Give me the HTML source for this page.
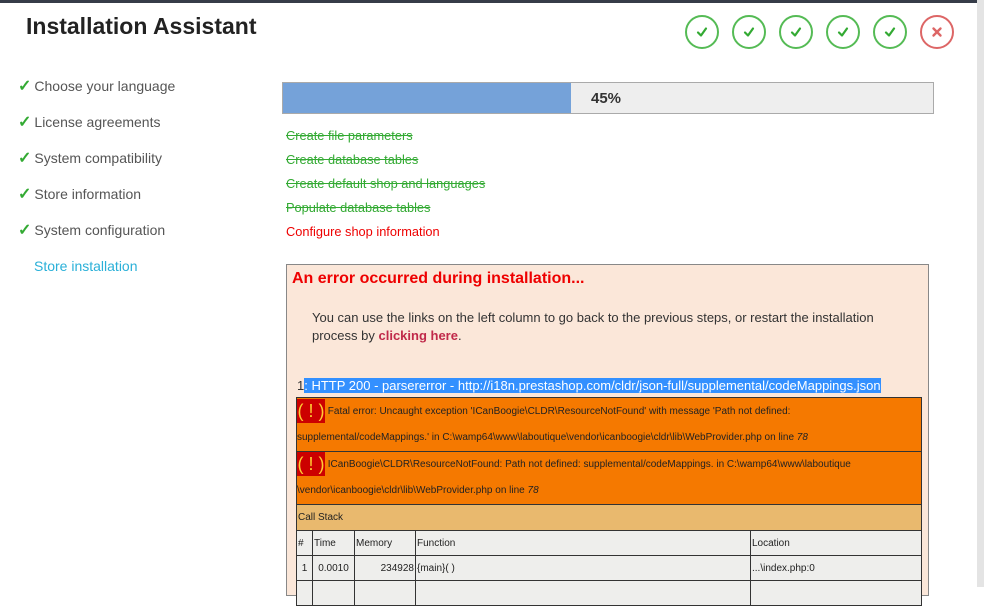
<html><head><style>
body{margin:0;width:984px;height:587px;overflow:hidden;background:#fff;font-family:"Liberation Sans",Arial,sans-serif;position:relative}
.a{position:absolute}
.nav{left:18px;font-size:14px;color:#555}
.nav b{color:#3a3;font-size:16px;margin-right:3px}
.st{left:286px;font-size:12.8px;color:#3a3;text-decoration:line-through}
.c{width:30px;height:30px;border:2px solid #5b5;border-radius:50%;top:15px}
.c svg{position:absolute;left:7px;top:7px}
table{border-collapse:collapse;font-size:10px;color:#222;table-layout:fixed}
td{border:1px solid #333;padding:1px}
.ex{display:inline-block;background:#c00;color:#fc3;font-size:18px;width:28px;text-align:center;line-height:24px;vertical-align:middle}
</style></head><body>
<div class="a" style="left:0;top:0;width:977px;height:3px;background:#363c48"></div>
<div class="a" style="left:977px;top:0;width:7px;height:587px;background:#e4e4e4"></div>
<div class="a" style="left:26px;top:13px;font-size:23px;font-weight:bold;color:#222">Installation Assistant</div>
<div class="a c" style="left:685px"><svg width="16" height="16"><path d="M4 8.5l3 3 5-7" fill="none" stroke="#3a3" stroke-width="2.2" stroke-linecap="round" stroke-linejoin="round"/></svg></div>
<div class="a c" style="left:732px"><svg width="16" height="16"><path d="M4 8.5l3 3 5-7" fill="none" stroke="#3a3" stroke-width="2.2" stroke-linecap="round" stroke-linejoin="round"/></svg></div>
<div class="a c" style="left:779px"><svg width="16" height="16"><path d="M4 8.5l3 3 5-7" fill="none" stroke="#3a3" stroke-width="2.2" stroke-linecap="round" stroke-linejoin="round"/></svg></div>
<div class="a c" style="left:826px"><svg width="16" height="16"><path d="M4 8.5l3 3 5-7" fill="none" stroke="#3a3" stroke-width="2.2" stroke-linecap="round" stroke-linejoin="round"/></svg></div>
<div class="a c" style="left:873px"><svg width="16" height="16"><path d="M4 8.5l3 3 5-7" fill="none" stroke="#3a3" stroke-width="2.2" stroke-linecap="round" stroke-linejoin="round"/></svg></div>
<div class="a c" style="left:920px;border-color:#d66"><svg width="16" height="16"><path d="M4.5 4.5l7 7M11.5 4.5l-7 7" fill="none" stroke="#d66" stroke-width="2.4" stroke-linecap="round"/></svg></div>
<div class="a nav" style="top:76px"><b>✓</b>Choose your language</div>
<div class="a nav" style="top:112px"><b>✓</b>License agreements</div>
<div class="a nav" style="top:148px"><b>✓</b>System compatibility</div>
<div class="a nav" style="top:184px"><b>✓</b>Store information</div>
<div class="a nav" style="top:220px"><b>✓</b>System configuration</div>
<div class="a nav" style="top:258px;left:34px;color:#2ab0d8">Store installation</div>
<div class="a" style="left:282px;top:82px;width:650px;height:30px;border:1px solid #aaa;background:#eee"></div>
<div class="a" style="left:283px;top:83px;width:288px;height:30px;background:#75a2d9"></div>
<div class="a" style="left:591px;top:90px;font-size:15px;font-weight:bold;color:#333">45%</div>
<div class="a st" style="top:128px">Create file parameters</div>
<div class="a st" style="top:152px">Create database tables</div>
<div class="a st" style="top:176px">Create default shop and languages</div>
<div class="a st" style="top:200px">Populate database tables</div>
<div class="a st" style="top:224px;color:#e00;text-decoration:none">Configure shop information</div>
<div class="a" style="left:286px;top:264px;width:641px;height:330px;border:1px solid #888;background:#fbe7d9"></div>
<div class="a" style="left:292px;top:270px;font-size:16px;font-weight:bold;color:#e00">An error occurred during installation...</div>
<div class="a" style="left:312px;top:309px;width:590px;font-size:13px;line-height:18px;color:#333">You can use the links on the left column to go back to the previous steps, or restart the installation process by <b style="color:#c0294a">clicking here</b>.</div>
<div class="a" style="left:297px;top:378px;font-size:13px;color:#333">1<span style="background:#3390ff;color:#fff">: HTTP 200 - parsererror - http://i18n.prestashop.com/cldr/json-full/supplemental/codeMappings.json</span></div>
<table class="a" style="left:296px;top:397px;width:626px">
<colgroup><col style="width:16px"><col style="width:42px"><col style="width:61px"><col style="width:335px"><col></colgroup>
<tr style="background:#f57900;height:54px"><td colspan="5" style="line-height:26px;padding:0"><span class="ex">( ! )</span> Fatal error: Uncaught exception 'ICanBoogie\CLDR\ResourceNotFound' with message 'Path not defined: supplemental/codeMappings.' in C:\wamp64\www\laboutique\vendor\icanboogie\cldr\lib\WebProvider.php on line <i>78</i></td></tr>
<tr style="background:#f57900;height:53px"><td colspan="5" style="line-height:26px;padding:0"><span class="ex">( ! )</span> ICanBoogie\CLDR\ResourceNotFound: Path not defined: supplemental/codeMappings. in C:\wamp64\www\laboutique \vendor\icanboogie\cldr\lib\WebProvider.php on line <i>78</i></td></tr>
<tr style="background:#e9b96e;height:26px"><td colspan="5">Call Stack</td></tr>
<tr style="background:#eeeeec;height:25px"><td>#</td><td>Time</td><td>Memory</td><td>Function</td><td>Location</td></tr>
<tr style="background:#eeeeec;height:25px"><td style="text-align:center">1</td><td style="text-align:center">0.0010</td><td style="text-align:right">234928</td><td>{main}( )</td><td>...\index.php:0</td></tr>
<tr style="background:#eeeeec;height:25px"><td></td><td></td><td></td><td></td><td></td></tr>
</table>
</body></html>
